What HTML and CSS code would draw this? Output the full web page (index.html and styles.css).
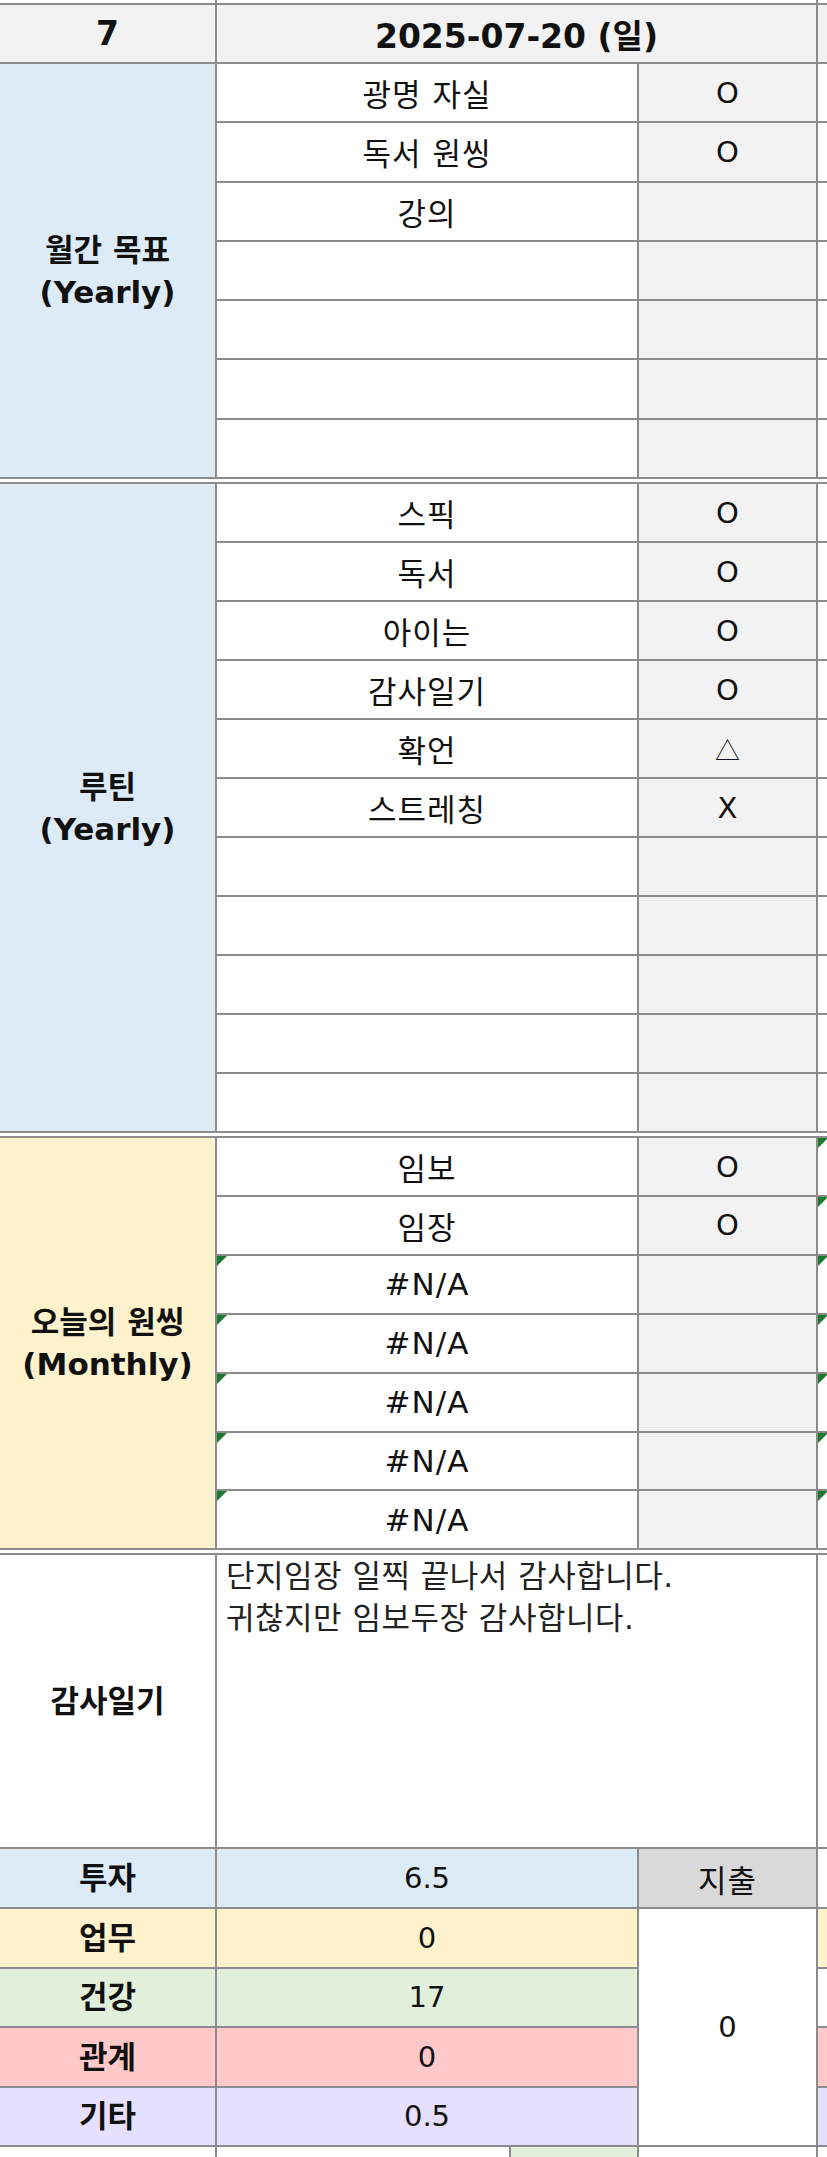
FILE: index.html
```html
<!DOCTYPE html>
<html lang="ko">
  <head>
    <meta charset="UTF-8" />
    <meta name="viewport" content="width=device-width, initial-scale=1.0" />
    <title>Daily sheet</title>
    <link rel="stylesheet" href="styles.css">
  </head>
  <body>
    <div class="sheet">
      <!-- tail of the row above -->
      <div class="stub-top">
        <div></div><div></div><div></div>
      </div>

      <div class="block head">
        <div class="cell title">7</div>
        <div class="cell title wide">2025-07-20 (일)</div>
        <div class="cell side grey"></div>
      </div>

      <!-- 월간 목표 -->
      <div class="block goals">
        <div class="cell label blue rows-7">월간 목표<br>(Yearly)</div>
        <div class="cell">광명 자실</div><div class="cell mark">O</div><div class="cell side"></div>
        <div class="cell">독서 원씽</div><div class="cell mark">O</div><div class="cell side"></div>
        <div class="cell">강의</div><div class="cell mark"></div><div class="cell side"></div>
        <div class="cell"></div><div class="cell mark"></div><div class="cell side"></div>
        <div class="cell"></div><div class="cell mark"></div><div class="cell side"></div>
        <div class="cell"></div><div class="cell mark"></div><div class="cell side"></div>
        <div class="cell"></div><div class="cell mark"></div><div class="cell side"></div>
      </div>

      <!-- 루틴 -->
      <div class="block routine gap">
        <div class="cell label blue rows-11">루틴<br>(Yearly)</div>
        <div class="cell">스픽</div><div class="cell mark">O</div><div class="cell side"></div>
        <div class="cell">독서</div><div class="cell mark">O</div><div class="cell side"></div>
        <div class="cell">아이는</div><div class="cell mark">O</div><div class="cell side"></div>
        <div class="cell">감사일기</div><div class="cell mark">O</div><div class="cell side"></div>
        <div class="cell">확언</div><div class="cell mark tri">△</div><div class="cell side"></div>
        <div class="cell">스트레칭</div><div class="cell mark">X</div><div class="cell side"></div>
        <div class="cell"></div><div class="cell mark"></div><div class="cell side"></div>
        <div class="cell"></div><div class="cell mark"></div><div class="cell side"></div>
        <div class="cell"></div><div class="cell mark"></div><div class="cell side"></div>
        <div class="cell"></div><div class="cell mark"></div><div class="cell side"></div>
        <div class="cell"></div><div class="cell mark"></div><div class="cell side"></div>
      </div>

      <!-- 오늘의 원씽 -->
      <div class="block monthly gap">
        <div class="cell label yellow rows-7">오늘의 원씽<br>(Monthly)</div>
        <div class="cell">임보</div><div class="cell mark">O</div><div class="cell side err"></div>
        <div class="cell">임장</div><div class="cell mark">O</div><div class="cell side err"></div>
        <div class="cell err">#N/A</div><div class="cell mark"></div><div class="cell side err"></div>
        <div class="cell err">#N/A</div><div class="cell mark"></div><div class="cell side err"></div>
        <div class="cell err">#N/A</div><div class="cell mark"></div><div class="cell side err"></div>
        <div class="cell err">#N/A</div><div class="cell mark"></div><div class="cell side err"></div>
        <div class="cell err">#N/A</div><div class="cell mark"></div><div class="cell side err"></div>
      </div>

      <!-- 감사일기 -->
      <div class="block diary gap">
        <div class="cell label">감사일기</div>
        <div class="cell note wide">단지임장 일찍 끝나서 감사합니다.<br>귀찮지만 임보두장 감사합니다.</div>
        <div class="cell side"></div>
      </div>

      <!-- 시간 기록 -->
      <div class="block money">
        <div class="cell label blue">투자</div><div class="cell num blue">6.5</div><div class="cell spend">지출</div><div class="cell side"></div>
        <div class="cell label yellow">업무</div><div class="cell num yellow">0</div><div class="cell num spend-total">0</div><div class="cell side yellow"></div>
        <div class="cell label green">건강</div><div class="cell num green">17</div><div class="cell side"></div>
        <div class="cell label pink">관계</div><div class="cell num pink">0</div><div class="cell side pink"></div>
        <div class="cell label violet">기타</div><div class="cell num violet">0.5</div><div class="cell side violet"></div>
      </div>

      <div class="stub-bottom">
        <div></div><div></div><div class="green"></div><div></div><div></div>
      </div>
    </div>
  </body>
</html>
```

FILE: styles.css
```css
* {
  margin: 0;
  padding: 0;
  box-sizing: border-box;
}
body {
  background: #fff;
  width: 827px;
  overflow: hidden;
  font-family: "DejaVu Sans", "Noto Sans CJK KR", sans-serif;
  color: #111;
}
.sheet {
  display: flex;
  flex-direction: column;
}

/* grid lines come from the grey background showing through the gaps */
.block {
  display: grid;
  grid-template-columns: 215px 420px 177px 9px;
  gap: 2px;
  background: #8c8c8c;
  padding: 2px 0;
}
.block.gap {
  margin-top: 3px;
}
.head {
  grid-template-rows: 57px;
  padding-bottom: 0;
}
.goals {
  grid-template-rows: repeat(7, 57.3px);
}
.routine {
  grid-template-rows: repeat(11, 57px);
}
.monthly {
  grid-template-rows: repeat(7, 56.9px);
}
.diary {
  grid-template-rows: 292px;
  padding-bottom: 0;
}
.money {
  grid-template-rows: repeat(5, 57.6px);
}

.stub-top {
  display: grid;
  grid-template-columns: 215px 599px 9px;
  column-gap: 2px;
  height: 3px;
  background: #8c8c8c;
}
.stub-bottom {
  display: grid;
  grid-template-columns: 215px 292px 126px 177px 9px;
  column-gap: 2px;
  height: 10px;
  background: #8c8c8c;
}
.stub-top div,
.stub-bottom div {
  background: #fff;
}
.stub-bottom .green {
  background: #e2efda;
}

.cell {
  position: relative;
  display: flex;
  align-items: center;
  justify-content: center;
  background: #fff;
  font-size: 31px;
  letter-spacing: 1px;
  white-space: nowrap;
}
.wide {
  grid-column: span 2;
}
.title {
  background: #f2f2f2;
  font-weight: bold;
  font-size: 33px;
  letter-spacing: 0;
}
.label {
  font-weight: bold;
  font-size: 31px;
  letter-spacing: 0;
  line-height: 42px;
  text-align: center;
}
.num {
  font-size: 29px;
  letter-spacing: 0;
}
.rows-7 {
  grid-row: span 7;
}
.rows-11 {
  grid-row: span 11;
}
.mark {
  background: #f2f2f2;
  font-size: 29px;
  letter-spacing: 0;
}
.mark.tri {
  font-family: "Noto Sans CJK KR", sans-serif;
  font-size: 25px;
}
.side {
  background: #fff;
}
.side.grey {
  background: #f2f2f2;
}
.note {
  display: block;
  padding-left: 9px;
  font-size: 31px;
  letter-spacing: 0.5px;
  line-height: 42px;
  color: #222;
}
.spend {
  background: #d9d9d9;
}
.spend-total {
  grid-row: span 4;
}

.blue {
  background: #ddebf7;
}
.yellow {
  background: #fff2cc;
}
.green {
  background: #e2efda;
}
.pink {
  background: #ffc9c9;
}
.violet {
  background: #e5e0ff;
}

/* excel error marker in the corner */
.err::before {
  content: "";
  position: absolute;
  left: 0;
  top: 0;
  border-style: solid;
  border-width: 10px 10px 0 0;
  border-color: #1d7a2c transparent transparent transparent;
}
```
